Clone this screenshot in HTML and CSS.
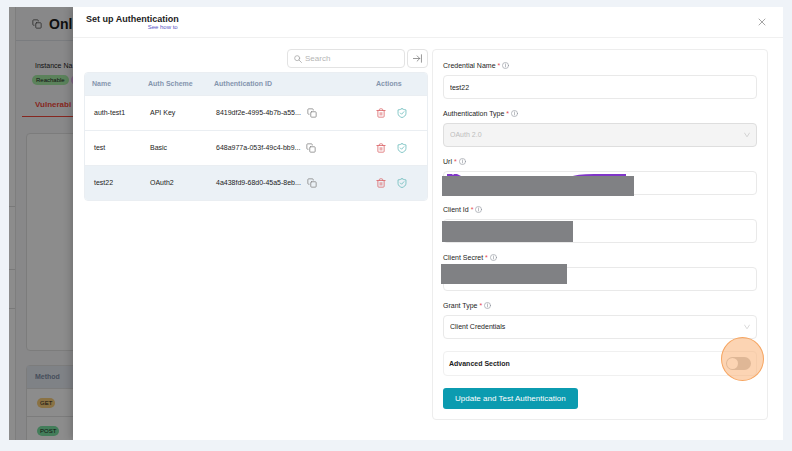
FILE: index.html
```html
<!DOCTYPE html>
<html lang="en">
<head>
    <meta charset="UTF-8" />
    <meta name="viewport" content="width=device-width, initial-scale=1.0"/>
    <title>Set up Authentication</title>
    <link rel="stylesheet" href="styles.css">
</head>
<body>
    <!-- Shared icons -->
    <svg class="icon-defs" aria-hidden="true">
        <symbol id="icon-copy" viewBox="0 0 24 24">
            <rect x="9" y="9" width="13" height="13" rx="2"/>
            <path d="M5 15H4a2 2 0 0 1-2-2V4a2 2 0 0 1 2-2h9a2 2 0 0 1 2 2v1"/>
        </symbol>
        <symbol id="icon-trash" viewBox="0 0 24 24">
            <path d="M2 6h20M19.500 6v14a2 2 0 0 1-2 2h-11a2 2 0 0 1-2-2V6M8 6V4a2 2 0 0 1 2-2h4a2 2 0 0 1 2 2v2M10 11v6M14 11v6"/>
        </symbol>
        <symbol id="icon-shield" viewBox="0 0 24 24">
            <path d="M12 1.500c3 2 6 2.800 9.500 3V13c0 5-4 8-9.500 10-5.500-2-9.500-5-9.500-10V4.500c3.500-.2 6.500-1 9.500-3z"/>
            <path d="M8 12l3 3 5.500-6"/>
        </symbol>
        <symbol id="icon-info" viewBox="0 0 24 24">
            <circle cx="12" cy="12" r="10.500"/>
            <path d="M12 11v6M12 6.500v2"/>
        </symbol>
    </svg>

    <div class="frame">
        <div class="page">
            <div class="sidebar">
                <div class="side-block side-top"></div>
                <div class="side-block side-mid"></div>
                <div class="side-block side-low"></div>
            </div>
            <div class="page-main">
                <div class="page-title">
                    <svg class="icon icon-title"><use href="#icon-copy"/></svg>
                    <h1>Onl</h1>
                </div>
                <div class="instance">
                    <p>Instance Na</p>
                    <div class="tags">
                        <span class="tag tag-green">Reachable</span>
                        <span class="tag tag-purple"></span>
                    </div>
                </div>
                <div class="tabs"><span class="tab">Vulnerabi</span></div>
                <div class="chart-card"></div>
                <div class="method-table">
                    <div class="method-head">Method</div>
                    <div class="method-row"><span class="tag tag-get">GET</span></div>
                    <div class="method-row"><span class="tag tag-post">POST</span></div>
                </div>
            </div>
        </div>
        <div class="mask"></div>

        <section class="drawer">
            <header class="drawer-header">
                <div class="drawer-title">
                    <h2>Set up Authentication</h2>
                    <a href="#">See how to</a>
                </div>
                <button class="close" type="button" aria-label="Close">
                    <svg class="icon icon-close" viewBox="0 0 24 24"><path d="M3 3l18 18M21 3L3 21"/></svg>
                </button>
            </header>

            <div class="drawer-body">
                <div class="list">
                    <div class="toolbar">
                        <label class="search">
                            <svg class="icon icon-search" viewBox="0 0 24 24"><circle cx="9.500" cy="9.500" r="7.500"/><path d="M15 15l7.500 7.500"/></svg>
                            <input type="search" placeholder="Search" aria-label="Search">
                        </label>
                        <button class="collapse" type="button" aria-label="Collapse">
                            <svg class="icon icon-collapse" viewBox="0 0 24 24"><path d="M1 12h17M11 5l7 7-7 7M22.500 2v20"/></svg>
                        </button>
                    </div>
                    <div class="table-wrap">
                        <table>
                            <thead>
                                <tr>
                                    <th class="col-name">Name</th>
                                    <th class="col-scheme">Auth Scheme</th>
                                    <th class="col-id">Authentication ID</th>
                                    <th class="col-actions">Actions</th>
                                </tr>
                            </thead>
                            <tbody>
                                <tr>
                                    <td>auth-test1</td>
                                    <td>API Key</td>
                                    <td><div class="id-cell"><span>8419df2e-4995-4b7b-a55...</span><button type="button" aria-label="Copy"><svg class="icon icon-copy"><use href="#icon-copy"/></svg></button></div></td>
                                    <td class="actions-cell"><div class="actions"><button type="button" aria-label="Delete"><svg class="icon icon-trash"><use href="#icon-trash"/></svg></button><button type="button" aria-label="Test"><svg class="icon icon-shield"><use href="#icon-shield"/></svg></button></div></td>
                                </tr>
                                <tr>
                                    <td>test</td>
                                    <td>Basic</td>
                                    <td><div class="id-cell"><span>648a977a-053f-49c4-bb9...</span><button type="button" aria-label="Copy"><svg class="icon icon-copy"><use href="#icon-copy"/></svg></button></div></td>
                                    <td class="actions-cell"><div class="actions"><button type="button" aria-label="Delete"><svg class="icon icon-trash"><use href="#icon-trash"/></svg></button><button type="button" aria-label="Test"><svg class="icon icon-shield"><use href="#icon-shield"/></svg></button></div></td>
                                </tr>
                                <tr class="selected">
                                    <td>test22</td>
                                    <td>OAuth2</td>
                                    <td><div class="id-cell"><span>4a438fd9-68d0-45a5-8eb...</span><button type="button" aria-label="Copy"><svg class="icon icon-copy"><use href="#icon-copy"/></svg></button></div></td>
                                    <td class="actions-cell"><div class="actions"><button type="button" aria-label="Delete"><svg class="icon icon-trash"><use href="#icon-trash"/></svg></button><button type="button" aria-label="Test"><svg class="icon icon-shield"><use href="#icon-shield"/></svg></button></div></td>
                                </tr>
                            </tbody>
                        </table>
                    </div>
                </div>

                <form class="auth-form">
                    <div class="field">
                        <label for="cred-name">Credential Name <b>*</b> <svg class="icon icon-info"><use href="#icon-info"/></svg></label>
                        <input id="cred-name" type="text" value="test22">
                    </div>
                    <div class="field">
                        <label for="auth-type">Authentication Type <b>*</b> <svg class="icon icon-info"><use href="#icon-info"/></svg></label>
                        <div class="control">
                            <select id="auth-type" disabled><option>OAuth 2.0</option></select>
                            <svg class="icon chevron" viewBox="0 0 24 24"><path d="M2 4l10 15L22 4"/></svg>
                        </div>
                    </div>
                    <div class="field">
                        <label for="url">Url <b>*</b> <svg class="icon icon-info"><use href="#icon-info"/></svg></label>
                        <div class="control">
                            <input id="url" type="text">
                            <svg class="scribble" viewBox="0 0 190 3"><path d="M4 0h5l1 1 1-1h3l4 2v1H4zM127 3q6-3 24-3h32v3z"/></svg>
                            <span class="redact redact-url"></span>
                        </div>
                    </div>
                    <div class="field">
                        <label for="client-id">Client Id <b>*</b> <svg class="icon icon-info"><use href="#icon-info"/></svg></label>
                        <div class="control">
                            <input id="client-id" type="text">
                            <span class="redact redact-id"></span>
                        </div>
                    </div>
                    <div class="field">
                        <label for="client-secret">Client Secret <b>*</b> <svg class="icon icon-info"><use href="#icon-info"/></svg></label>
                        <div class="control">
                            <input id="client-secret" type="text">
                            <span class="redact redact-secret"></span>
                        </div>
                    </div>
                    <div class="field">
                        <label for="grant-type">Grant Type <b>*</b> <svg class="icon icon-info"><use href="#icon-info"/></svg></label>
                        <div class="control">
                            <select id="grant-type"><option>Client Credentials</option></select>
                            <svg class="icon chevron" viewBox="0 0 24 24"><path d="M2 4l10 15L22 4"/></svg>
                        </div>
                    </div>
                    <div class="advanced">
                        <label for="advanced">Advanced Section</label>
                        <input id="advanced" class="switch" type="checkbox" role="switch">
                        <span class="click-marker"></span>
                    </div>
                    <button class="submit" type="submit">Update and Test Authentication</button>
                </form>
            </div>
        </section>
    </div>
</body>
</html>
```

FILE: styles.css
```css
* { box-sizing: border-box; }
body { margin: 0; padding: 7px 9px 11px; min-height: 100vh; background: #eff3f8; font-family: "Liberation Sans", Arial, sans-serif; font-size: 7px; line-height: 12px; color: #1c1c1c; }
h1, h2, p { margin: 0; }
button { font: inherit; padding: 0; border: 0; background: none; cursor: pointer; }
input, select { font: inherit; color: inherit; margin: 0; }
.icon-defs { position: absolute; width: 0; height: 0; }
.icon { display: block; flex: none; fill: none; stroke: currentColor; stroke-width: 2; stroke-linecap: round; stroke-linejoin: round; }

.frame { position: relative; display: grid; overflow: hidden; min-height: calc(100vh - 18px); }

/* Page behind the drawer */
.page { grid-area: 1 / 1; display: flex; height: 0; min-height: 100%; overflow: hidden; background: #fcfcfd; }
.sidebar { width: 7px; border-right: 1px solid #e6e6e6; background: #fff; }
.side-block { border-bottom: 1px solid #dcdcdc; }
.side-top { height: 200px; }
.side-mid { height: 63px; }
.side-low { height: 39px; }
.page-main { flex: 1; background: #f8f8f9; }
.page-title { display: flex; align-items: center; gap: 7px; height: 34px; padding-left: 16px; border-bottom: 1px solid #dfe2e8; }
.page-title h1 { font-size: 14px; line-height: 16px; }
.icon-title { width: 10px; height: 10px; color: #555; }
.instance { padding: 19px 0 0 19px; }
.tags { display: flex; gap: 2px; margin: 3px 0 0 -3px; }
.tag { border-radius: 5px; padding: 0 3px; font-size: 6px; line-height: 10px; }
.tag-green { padding: 0 4px; background: #a6eda6; }
.tag-purple { width: 40px; background: #e6b8f0; }
.tabs { padding: 14px 0 0 6px; }
.tab { display: block; padding: 0 0 5px 13px; border-bottom: 1px solid #f5483b; color: #f5483b; font-size: 8px; font-weight: bold; }
.chart-card { height: 218px; margin: 16px 0 0 10px; border: 1px solid #e2e2e2; border-radius: 4px; background: #fff; }
.method-table { margin: 14px 0 0 10px; border: 1px solid #e2e2e2; border-radius: 4px; background: #fff; }
.method-head { padding: 5px 8px; background: #e8edf4; color: #8190a8; font-weight: bold; }
.method-row { display: flex; align-items: center; height: 28px; padding-left: 10px; border-top: 1px solid #e2e2e2; }
.tag-get { background: #fbcf7c; }
.tag-post { background: #7be3a4; }
.mask { grid-area: 1 / 1; background: rgba(0, 0, 0, 0.45); }

/* Drawer */
.drawer { grid-area: 1 / 1; margin-left: 64px; background: #fff; box-shadow: -2px 0 8px rgba(0, 0, 0, 0.2); }
.drawer-header { display: flex; align-items: center; justify-content: space-between; height: 31px; padding: 0 17px 0 13px; border-bottom: 1px solid #f0f0f0; }
.drawer-title { display: flex; flex-direction: column; align-items: flex-end; }
.drawer-title h2 { font-size: 9px; line-height: 10px; }
.drawer-title a { padding-right: 1px; color: #5553c4; font-size: 6px; line-height: 6px; text-decoration: none; }
.close { color: #777; }
.icon-close { width: 8px; height: 8px; }
.drawer-body { display: grid; grid-template-columns: 344px 1fr; align-items: start; gap: 4px; padding: 11px 15px 20px 11px; }

.toolbar { display: flex; justify-content: flex-end; gap: 2px; margin-bottom: 4px; }
.search { display: flex; align-items: center; gap: 3px; width: 118px; height: 19px; padding: 0 6px; border: 1px solid #e3e3e3; border-radius: 4px; }
.search input { width: 100%; padding: 0; border: 0; outline: 0; background: none; font-size: 8px; }
.search input::placeholder { color: #b5b5b5; opacity: 1; }
.icon-search { width: 8px; height: 8px; color: #999; }
.collapse { display: grid; place-items: center; width: 21px; height: 19px; border: 1px solid #e3e3e3; border-radius: 4px; color: #777; }
.icon-collapse { width: 9px; height: 9px; }

.table-wrap { overflow: hidden; border: 1px solid #eaeef2; border-radius: 4px; }
table { width: 100%; table-layout: fixed; border-collapse: collapse; text-align: left; }
th { height: 22px; padding: 0 7px; background: #ebf1f6; color: #8595ae; }
td { height: 35px; padding: 0 0 0 9px; border-top: 1px solid #eaeef2; }
.col-name { width: 56px; }
.col-scheme { width: 66px; }
.col-id { width: 162px; }
.selected td { background: #ebf1f6; }
.id-cell { display: flex; align-items: center; gap: 6px; white-space: nowrap; }
.id-cell button { color: #8a8a8a; }
.icon-copy { width: 10px; height: 10px; }
.actions-cell { padding-left: 7px; }
.actions { display: flex; gap: 11px; }
.icon-trash, .icon-shield { width: 10px; height: 10px; }
.icon-trash { color: #dc6a6d; }
.icon-shield { color: #6fbdbd; }

/* Form */
.auth-form { padding: 10px; border: 1px solid #ededed; border-radius: 4px; }
.field { display: flex; flex-direction: column; gap: 3px; margin-bottom: 9px; }
.field label { display: flex; align-items: center; gap: 2px; }
.field b { color: #e5484d; font-weight: normal; }
.icon-info { width: 7px; height: 7px; margin-bottom: 1px; color: #8a8f98; }
.control { position: relative; display: flex; }
.field input, .field select { width: 100%; height: 24px; padding: 0 6px; border: 1px solid #e9e9e9; border-radius: 4px; background: #fff; appearance: none; }
.field select:disabled { border-color: #dedede; background: #f4f4f4; color: #bdbdbd; opacity: 1; }
.chevron { position: absolute; top: 9px; right: 7px; width: 6px; height: 6px; color: #b5b5b5; }
.redact { position: absolute; background: #808184; }
.redact-url { top: 5px; left: -1px; width: 192px; height: 20px; }
.redact-id { top: 2px; left: -1px; width: 131px; height: 21px; }
.redact-secret { top: -3px; left: -2px; width: 126px; height: 20px; }
.scribble { position: absolute; top: 3px; left: 0; width: 190px; height: 3px; fill: #8036c8; }

.advanced { position: relative; display: flex; align-items: center; justify-content: space-between; height: 25px; margin: 12px 0; padding: 0 5px; border: 1px solid #f0f0f0; border-radius: 4px; font-weight: bold; }
.switch { appearance: none; width: 25px; height: 13px; padding: 1px; border-radius: 7px; background: #bfbfbf; }
.switch::before { content: ""; display: block; width: 11px; height: 11px; border-radius: 50%; background: #fff; }
.click-marker { position: absolute; top: -15px; right: -8px; width: 43px; height: 44px; border: 1px solid #f6a561; border-radius: 50%; background: rgba(250, 176, 116, 0.55); pointer-events: none; }
.submit { display: block; height: 21px; padding: 0 12px; border-radius: 3px; background: #0b9bb0; color: #fff; font-size: 8px; }
```
